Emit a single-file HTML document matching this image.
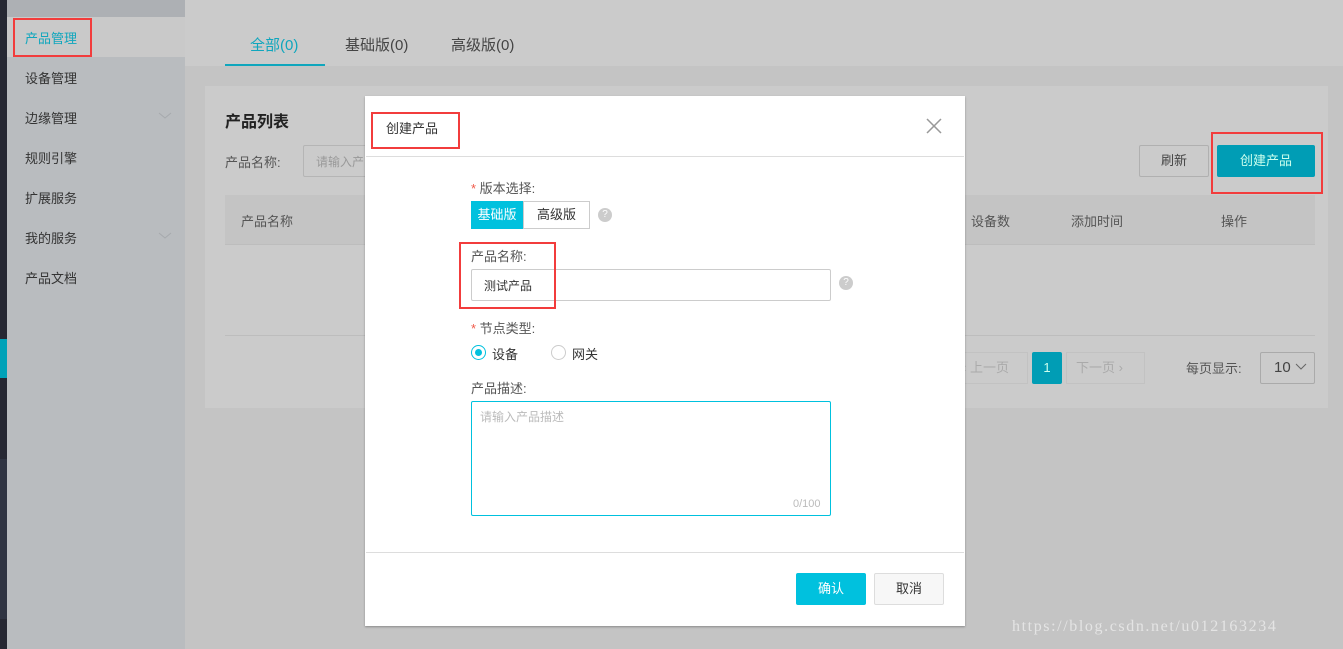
<!DOCTYPE html>
<html><head><meta charset="utf-8"><style>
*{box-sizing:border-box;margin:0;padding:0}
body{width:1343px;height:649px;overflow:hidden;background:#c4c4c4;font-family:"Liberation Sans","Noto Sans CJK SC",sans-serif;font-size:13px;color:#333;position:relative}
.a{position:absolute;white-space:nowrap}
.red{position:absolute;border:2px solid #f23c3c}
</style></head><body>
<div class="a" style="left:0;top:0;width:7px;height:649px;background:#262833"></div>
<div class="a" style="left:0;top:339px;width:7px;height:39px;background:#00a2b8"></div>
<div class="a" style="left:0;top:459px;width:7px;height:160px;background:#2f3442"></div>
<div class="a" style="left:7px;top:0;width:178px;height:649px;background:#b9bcbf"></div>
<div class="a" style="left:7px;top:0;width:178px;height:17px;background:#adb0b4"></div>
<div class="a" style="left:7px;top:17px;width:178px;height:40px;background:#c9c9c9"></div>
<div class="a" style="left:25px;top:28px;color:#0fa6bd;font-size:13px">产品管理</div>
<div class="red" style="left:13px;top:18px;width:79px;height:39px"></div>
<div class="a" style="left:25px;top:68px">设备管理</div>
<div class="a" style="left:25px;top:108px">边缘管理</div>
<div class="a" style="left:25px;top:148px">规则引擎</div>
<div class="a" style="left:25px;top:188px">扩展服务</div>
<div class="a" style="left:25px;top:228px">我的服务</div>
<div class="a" style="left:25px;top:268px">产品文档</div>
<svg class="a" style="left:158px;top:110px" width="14" height="10"><path d="M1 3l6 5 6-5" fill="none" stroke="#a6a9ad"/></svg>
<svg class="a" style="left:158px;top:230px" width="14" height="10"><path d="M1 3l6 5 6-5" fill="none" stroke="#a6a9ad"/></svg>
<div class="a" style="left:185px;top:0;width:1158px;height:66px;background:#cbcbcb"></div>
<div class="a" style="left:250px;top:34px;color:#0fa6bd;font-size:15px">全部(0)</div>
<div class="a" style="left:225px;top:64px;width:100px;height:2px;background:#0fa6bd"></div>
<div class="a" style="left:345px;top:34px;font-size:15px;color:#444">基础版(0)</div>
<div class="a" style="left:451px;top:34px;font-size:15px;color:#444">高级版(0)</div>
<div class="a" style="left:205px;top:86px;width:1123px;height:322px;background:#cbcbcb"></div>
<div class="a" style="left:225px;top:108px;font-size:16px;font-weight:bold;color:#222">产品列表</div>
<div class="a" style="left:225px;top:152px;color:#555">产品名称:</div>
<div class="a" style="left:303px;top:145px;width:100px;height:32px;border:1px solid #b5b5b5;border-radius:2px;color:#999;padding:7px 12px;font-size:12px;overflow:hidden">请输入产品名称</div>
<div class="a" style="left:225px;top:195px;width:1090px;height:50px;background:#c4c4c4;border-bottom:1px solid #bdbdbd"></div>
<div class="a" style="left:241px;top:211px;color:#555">产品名称</div>
<div class="a" style="left:971px;top:211px;color:#555">设备数</div>
<div class="a" style="left:1071px;top:211px;color:#555">添加时间</div>
<div class="a" style="left:1221px;top:211px;color:#555">操作</div>
<div class="a" style="left:225px;top:335px;width:1090px;height:1px;background:#bdbdbd"></div>
<div class="a" style="left:1139px;top:145px;width:70px;height:32px;border:1px solid #b0b0b0;border-radius:2px;text-align:center;line-height:30px;color:#444">刷新</div>
<div class="a" style="left:1217px;top:145px;width:98px;height:32px;background:#009db5;border-radius:2px;text-align:center;line-height:32px;color:#cfe;">创建产品</div>
<div class="red" style="left:1211px;top:132px;width:112px;height:62px"></div>
<div class="a" style="left:955px;top:352px;width:73px;height:32px;border:1px solid #c2c2c2;color:#aaa;line-height:30px;padding-left:6px">‹ 上一页</div>
<div class="a" style="left:1032px;top:352px;width:30px;height:32px;background:#009db5;border-radius:2px;color:#cfe;text-align:center;line-height:32px">1</div>
<div class="a" style="left:1066px;top:352px;width:79px;height:32px;border:1px solid #c2c2c2;color:#aaa;line-height:30px;padding-left:9px">下一页 ›</div>
<div class="a" style="left:1186px;top:358px;color:#555">每页显示:</div>
<div class="a" style="left:1260px;top:352px;width:55px;height:32px;border:1px solid #aaa;border-radius:2px;line-height:30px;padding-left:13px;font-size:15px;color:#444">10</div>
<svg class="a" style="left:1295px;top:362px" width="12" height="10"><path d="M1 2l5 5 5-5" fill="none" stroke="#666"/></svg>

<div class="a" style="left:365px;top:96px;width:600px;height:530px;background:#fff;box-shadow:0 1px 2px rgba(0,0,0,.3)"></div>
<div class="a" style="left:386px;top:118px;font-size:13px;color:#333">创建产品</div>
<div class="red" style="left:371px;top:112px;width:89px;height:37px"></div>
<svg class="a" style="left:925px;top:117px" width="18" height="18"><path d="M2 2l14 14M16 2L2 16" stroke="#999" stroke-width="1.5"/></svg>
<div class="a" style="left:366px;top:156px;width:598px;height:1px;background:#ddd"></div>
<div class="a" style="left:471px;top:178px;color:#555"><span style="color:#f05a4a">*</span> 版本选择:</div>
<div class="a" style="left:471px;top:201px;width:52px;height:28px;background:#00c1de;color:#fff;line-height:28px;text-align:center">基础版</div>
<div class="a" style="left:523px;top:201px;width:67px;height:28px;border:1px solid #ccc;line-height:26px;text-align:center;color:#333">高级版</div>
<div class="a" style="left:598px;top:208px;width:14px;height:14px;border-radius:50%;background:#ccc;color:#fff;font-size:10px;text-align:center;line-height:14px">?</div>
<div class="a" style="left:471px;top:246px;color:#555">产品名称:</div>
<div class="a" style="left:471px;top:269px;width:360px;height:32px;border:1px solid #ccc;border-radius:2px;padding:7px 12px;font-size:12px;color:#333">测试产品</div>
<div class="a" style="left:839px;top:276px;width:14px;height:14px;border-radius:50%;background:#ccc;color:#fff;font-size:10px;text-align:center;line-height:14px">?</div>
<div class="red" style="left:459px;top:242px;width:97px;height:67px"></div>
<div class="a" style="left:471px;top:318px;color:#555"><span style="color:#f05a4a">*</span> 节点类型:</div>
<div class="a" style="left:471px;top:345px;width:15px;height:15px;border:1px solid #00c1de;border-radius:50%"></div>
<div class="a" style="left:475px;top:349px;width:7px;height:7px;background:#00c1de;border-radius:50%"></div>
<div class="a" style="left:492px;top:344px;color:#333">设备</div>
<div class="a" style="left:551px;top:345px;width:15px;height:15px;border:1px solid #ccc;border-radius:50%"></div>
<div class="a" style="left:572px;top:344px;color:#333">网关</div>
<div class="a" style="left:471px;top:378px;color:#555">产品描述:</div>
<div class="a" style="left:471px;top:401px;width:360px;height:115px;border:1px solid #00c1de;border-radius:2px;padding:6px 8px;font-size:12px;color:#bbb">请输入产品描述</div>
<div class="a" style="left:793px;top:498px;font-size:11px;color:#bbb">0/100</div>
<div class="a" style="left:366px;top:552px;width:598px;height:1px;background:#ddd"></div>
<div class="a" style="left:796px;top:573px;width:70px;height:32px;background:#00c1de;border-radius:2px;color:#fff;text-align:center;line-height:32px">确认</div>
<div class="a" style="left:874px;top:573px;width:70px;height:32px;background:#f7f7f7;border:1px solid #ddd;border-radius:2px;color:#333;text-align:center;line-height:30px">取消</div>
<div class="a" style="left:1012px;top:618px;font-family:'Liberation Serif',serif;font-size:16px;letter-spacing:1.6px;color:rgba(255,255,255,.55)">https://blog.csdn.net/u012163234</div>
</body></html>
